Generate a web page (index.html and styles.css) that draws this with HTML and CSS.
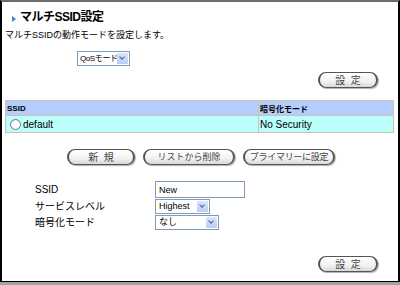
FILE: index.html
```html
<!DOCTYPE html>
<html lang="ja">

<head>
    <meta charset="UTF-8">
    <title>マルチSSID設定</title>
    <link rel="stylesheet" href="styles.css">
</head>

<body>
    <div class="frame">
        <h1 class="title"><span class="mark"></span>マルチSSID設定</h1>
        <p class="lead">マルチSSIDの動作モードを設定します。</p>

        <div class="mode-row">
            <div class="sel sel-mode"><span class="val">QoSモード</span><span class="arrow"></span></div>
        </div>

        <div class="btn-row btn-right">
            <button class="pill pill-set">設&nbsp;&nbsp;定</button>
        </div>

        <table class="ssid-table">
            <tr class="head">
                <th class="col-ssid">SSID</th>
                <th>暗号化モード</th>
            </tr>
            <tr class="item">
                <td><span class="radio"></span>default</td>
                <td>No Security</td>
            </tr>
        </table>

        <div class="btn-row btn-center">
            <button class="pill pill-new">新&nbsp;&nbsp;規</button>
            <button class="pill pill-del">リストから削除</button>
            <button class="pill pill-pri">プライマリーに設定</button>
        </div>

        <div class="form">
            <label class="lbl">SSID</label>
            <div><input class="txt" type="text" value="New"></div>
            <label class="lbl">サービスレベル</label>
            <div class="sel sel-level"><span class="val">Highest</span><span class="arrow"></span></div>
            <label class="lbl">暗号化モード</label>
            <div class="sel sel-enc"><span class="val">なし</span><span class="arrow"></span></div>
        </div>

        <div class="btn-row btn-right btn-bottom">
            <button class="pill pill-set">設&nbsp;&nbsp;定</button>
        </div>
    </div>
</body>

</html>
```

FILE: styles.css
```css
html,
body {
    margin: 0;
    background: #a4a4a4;
}

body,
button,
input {
    font-family: "Liberation Sans", "Noto Sans CJK JP", sans-serif;
    font-size: 10px;
    color: #000;
}

.frame {
    box-sizing: border-box;
    width: 400px;
    height: 282px;
    background: #fff;
    border-top: 2px solid #6c6c6c;
    border-left: 2px solid #000;
    border-right: 2px solid #000;
    border-bottom: 1px solid #000;
    display: flex;
    flex-direction: column;
}

.title {
    margin: 7px 0 0 10px;
    font-size: 12px;
    line-height: 17px;
    letter-spacing: -0.5px;
    font-weight: bold;
    display: flex;
    align-items: center;
}

.mark {
    width: 0;
    height: 0;
    border-left: 4px solid #3b86d4;
    border-top: 3px solid transparent;
    border-bottom: 3px solid transparent;
    margin: 2px 4px 0 0;
}

.lead {
    margin: 3px 0 0 3px;
    font-size: 9px;
    line-height: 12px;
}

.mode-row {
    display: flex;
    margin: 10px 0 0 75px;
}

/* fake select boxes */

.sel {
    box-sizing: border-box;
    display: inline-flex;
    align-items: center;
    height: 15px;
    border: 1px solid #7f9db9;
    background: #fff;
    padding: 0 1px 0 3px;
    white-space: nowrap;
    font-size: 9px;
}

.sel .val {
    flex: 1;
    min-width: 0;
    line-height: 13px;
}

.sel .arrow {
    flex-shrink: 0;
    width: 11px;
    height: 11px;
    background: linear-gradient(#dbe6fc, #b9cdf6);
    position: relative;
}

.sel .arrow::after {
    content: "";
    position: absolute;
    left: 3px;
    top: 2px;
    width: 3px;
    height: 3px;
    border-right: 1.5px solid #4d6185;
    border-bottom: 1.5px solid #4d6185;
    transform: rotate(45deg);
}

.sel-mode {
    width: 53px;
    font-size: 8px;
    letter-spacing: -0.4px;
    padding-left: 2px;
}

.sel-level {
    width: 55px;
}

.sel-enc {
    width: 64px;
}

/* pill buttons */

.btn-row {
    display: flex;
    gap: 8px;
}

.btn-right {
    justify-content: flex-end;
    padding-right: 20px;
    margin-top: 6px;
}

.btn-center {
    justify-content: center;
    margin-top: 16px;
    padding-left: 2px;
}

.btn-bottom {
    margin-top: auto;
    margin-bottom: 9px;
}

.pill {
    box-sizing: border-box;
    height: 16px;
    padding: 0;
    border: 1px solid #555;
    border-left-width: 2px;
    border-right-width: 2px;
    border-radius: 8px;
    background: linear-gradient(#ffffff, #f2f2f2 60%, #d8d8d8);
    box-shadow: 1px 1px 1px #b0b0b0;
    color: #444;
    font-size: 10px;
    line-height: 13px;
    white-space: nowrap;
}

.pill-set {
    width: 60px;
}

.pill-new {
    width: 68px;
}

.pill-del {
    width: 92px;
    font-size: 9px;
}

.pill-pri {
    width: 92px;
    font-size: 9px;
    letter-spacing: -0.3px;
}

/* ssid list */

.ssid-table {
    margin: 12px 0 0 3px;
    width: 389px;
    border-collapse: collapse;
}

.ssid-table th,
.ssid-table td {
    border: 1px solid #cdc2ab;
    text-align: left;
    padding: 0 1px;
}

.ssid-table th {
    background: #b5cdfc;
    font-size: 8px;
    height: 14px;
}

.ssid-table td {
    background: #bbfffd;
    height: 16px;
}

.col-ssid {
    width: 250px;
}

.radio {
    display: inline-block;
    box-sizing: border-box;
    width: 11px;
    height: 11px;
    border: 1px solid #6c7a8a;
    border-radius: 50%;
    background: radial-gradient(circle at 60% 60%, #fff 40%, #d9dde3);
    vertical-align: -2px;
    margin: 0 2px 0 3px;
}

/* form */

.form {
    display: grid;
    grid-template-columns: 120px auto;
    row-gap: 1px;
    margin: 16px 0 0 33px;
    align-items: center;
}

.form > div {
    display: flex;
}

.lbl {
    line-height: 14px;
}

.txt {
    box-sizing: border-box;
    width: 90px;
    height: 17px;
    border: 1px solid #7f9db9;
    padding: 0 3px;
    font-size: 9px;
}
```
